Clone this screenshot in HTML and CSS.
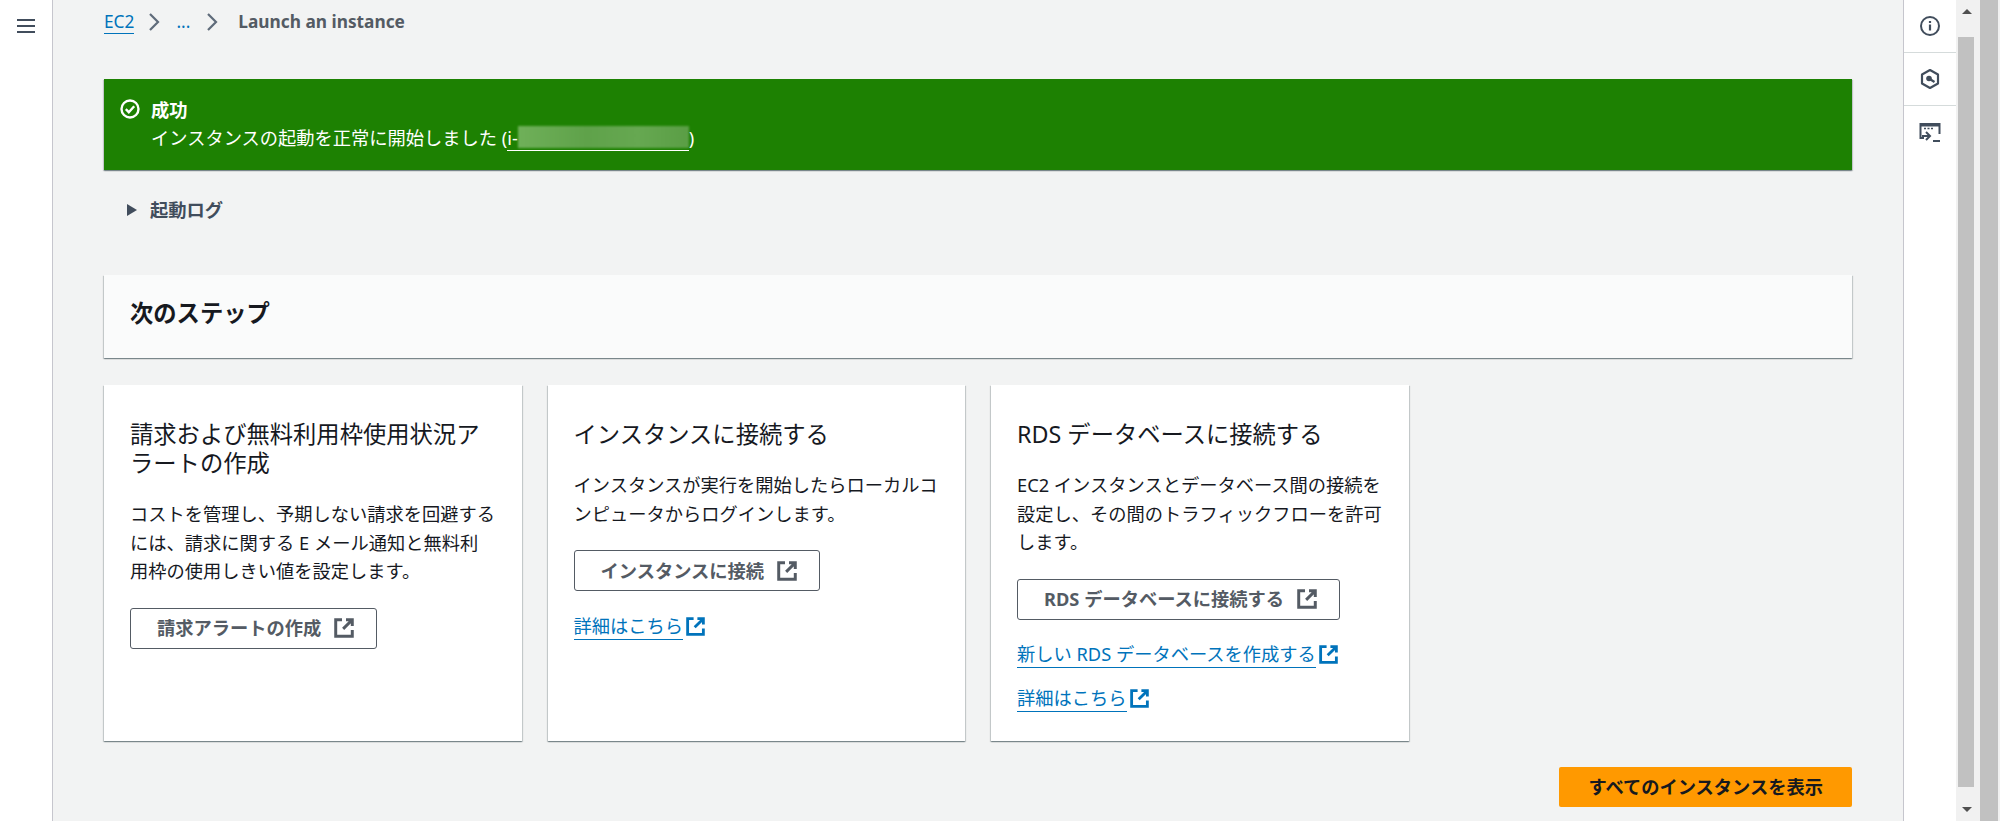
FILE: index.html
```html
<!DOCTYPE html>
<html lang="ja">

<head>
    <title>Launch an instance</title>
    <link rel="stylesheet" href="styles.css">
</head>

<body>
    <svg class="sprites" width="0" height="0">
        <symbol id="external" viewBox="1 1.500 17.500 17.500">
            <path d="M8 3H2.500v14.500H17V12M11.500 3H17v5.500M17 3L9 11" fill="none" stroke="currentColor" stroke-width="2.600" />
        </symbol>
    </svg>

    <div class="layout">
        <nav class="side-nav">
            <svg class="menu-icon" width="18" height="16" viewBox="0 0 18 16">
                <path d="M0 2h18M0 8h18M0 14h18" stroke="#414d5c" stroke-width="2" />
            </svg>
        </nav>

        <main class="content">
            <div class="breadcrumbs">
                <a class="crumb-link" href="#">EC2</a>
                <svg class="chevron" width="14" height="20" viewBox="0 0 14 20">
                    <path d="M3 2l8 8-8 8" fill="none" stroke="#5f6b7a" stroke-width="2.200" />
                </svg>
                <a class="crumb-more" href="#">...</a>
                <svg class="chevron" width="14" height="20" viewBox="0 0 14 20">
                    <path d="M3 2l8 8-8 8" fill="none" stroke="#5f6b7a" stroke-width="2.200" />
                </svg>
                <span class="crumb-current">Launch an instance</span>
            </div>

            <div class="flash">
                <svg class="flash-icon" width="20" height="20" viewBox="0 0 20 20">
                    <circle cx="10" cy="10" r="8.500" fill="none" stroke="#fff" stroke-width="2.400" />
                    <path d="M5.800 10.200l3 3 5.400-6" fill="none" stroke="#fff" stroke-width="2.400" />
                </svg>
                <div class="flash-text">
                    <div class="flash-title">成功</div>
                    <div>インスタンスの起動を正常に開始しました (<span class="instance-id">i-<span class="blurred"></span></span>)</div>
                </div>
            </div>

            <div class="log-toggle">
                <span class="caret"></span>
                <span>起動ログ</span>
            </div>

            <div class="steps-header">
                <h2>次のステップ</h2>
            </div>

            <div class="cards">
                <section class="card">
                    <h3>請求および無料利用枠使用状況アラートの作成</h3>
                    <p>コストを管理し、予期しない請求を回避するには、請求に関する E メール通知と無料利用枠の使用しきい値を設定します。</p>
                    <a class="btn" href="#">請求アラートの作成
                        <svg width="20" height="20"><use href="#external" /></svg>
                    </a>
                </section>

                <section class="card">
                    <h3>インスタンスに接続する</h3>
                    <p>インスタンスが実行を開始したらローカルコンピュータからログインします。</p>
                    <a class="btn" href="#">インスタンスに接続
                        <svg width="20" height="20"><use href="#external" /></svg>
                    </a>
                    <div class="card-links">
                        <div class="ext-link"><a href="#">詳細はこちら</a>
                            <svg width="19" height="19"><use href="#external" /></svg>
                        </div>
                    </div>
                </section>

                <section class="card">
                    <h3>RDS データベースに接続する</h3>
                    <p>EC2 インスタンスとデータベース間の接続を設定し、その間のトラフィックフローを許可します。</p>
                    <a class="btn" href="#">RDS データベースに接続する
                        <svg width="20" height="20"><use href="#external" /></svg>
                    </a>
                    <div class="card-links">
                        <div class="ext-link"><a href="#">新しい RDS データベースを作成する</a>
                            <svg width="19" height="19"><use href="#external" /></svg>
                        </div>
                        <div class="ext-link"><a href="#">詳細はこちら</a>
                            <svg width="19" height="19"><use href="#external" /></svg>
                        </div>
                    </div>
                </section>
            </div>

            <div class="actions">
                <a class="btn-primary" href="#">すべてのインスタンスを表示</a>
            </div>
        </main>

        <aside class="tools">
            <div class="tool">
                <svg width="22" height="22" viewBox="0 0 22 22">
                    <circle cx="11" cy="11" r="9" fill="none" stroke="#414d5c" stroke-width="2" />
                    <path d="M11 9.500v6" stroke="#414d5c" stroke-width="2.200" />
                    <path d="M11 6v2" stroke="#414d5c" stroke-width="2.200" />
                </svg>
            </div>
            <div class="tool">
                <svg width="22" height="22" viewBox="0 0 22 22">
                    <path d="M11 2l8 4.500v9L11 20l-8-4.500v-9z" fill="none" stroke="#414d5c" stroke-width="2.200" stroke-linejoin="round" />
                    <circle cx="10" cy="10.500" r="2.800" fill="#414d5c" />
                    <path d="M10 10.500l5.500 3.500" stroke="#414d5c" stroke-width="2.200" />
                </svg>
            </div>
            <div class="tool">
                <svg width="22" height="22" viewBox="0 0 22 22">
                    <path d="M5 16H1.500V2h19v10" fill="none" stroke="#414d5c" stroke-width="2" />
                    <path d="M1.500 3.500h19" stroke="#414d5c" stroke-width="2" />
                    <path d="M5 6.500h2M8.500 6.500h2M12 6.500h2" stroke="#414d5c" stroke-width="1.500" />
                    <path d="M7 10l4 4-4 4M3 14h7" fill="none" stroke="#414d5c" stroke-width="2" />
                    <path d="M14 19h7" stroke="#414d5c" stroke-width="2" />
                </svg>
            </div>
        </aside>

        <div class="scrollbar scrollbar-inner">
            <span class="arrow-up"></span>
            <div class="thumb"></div>
            <span class="arrow-down"></span>
        </div>
        <div class="scrollbar scrollbar-outer">
            <div class="thumb"></div>
        </div>
    </div>
</body>

</html>
```

FILE: styles.css
```css
* {
    margin: 0;
    padding: 0;
    box-sizing: border-box;
}

body {
    font-family: "Noto Sans", "Noto Sans CJK JP", sans-serif;
    font-size: 18.250px;
    line-height: 28px;
    color: #16191f;
    background: #f2f3f3;
    height: 100vh;
    overflow: hidden;
}

a {
    text-decoration: none;
}

.sprites {
    position: absolute;
}

.layout {
    display: flex;
    height: 100vh;
}

.side-nav {
    width: 53px;
    flex: none;
    background: #fff;
    border-right: 1px solid #c6c6cd;
    padding: 18px 0 0 17px;
}

.menu-icon {
    display: block;
}

.content {
    flex: 1;
    min-width: 0;
    padding: 8px 51px 0;
}

.breadcrumbs {
    display: flex;
    align-items: center;
    height: 28px;
    font-size: 17.300px;
}

.crumb-link {
    color: #0073bb;
    border-bottom: 1px solid #0073bb;
    line-height: 22px;
}

.crumb-more {
    color: #0073bb;
    margin: 0 15px;
}

.chevron {
    margin-left: 13px;
}

.crumb-more + .chevron {
    margin-left: 0;
}

.crumb-current {
    margin-left: 19px;
    font-weight: 700;
    color: #545b64;
}

.flash {
    display: flex;
    margin-top: 43px;
    height: 91px;
    padding: 17px 16px 0;
    background: #1d8102;
    color: #fff;
    box-shadow: 0 1px 1px rgba(0, 28, 36, 0.3), 1px 1px 1px rgba(0, 28, 36, 0.15), -1px 1px 1px rgba(0, 28, 36, 0.15);
}

.flash-icon {
    flex: none;
    margin: 3px 11px 0 0;
}

.flash-title {
    font-weight: 700;
}

.instance-id {
    display: inline-block;
    border-bottom: 1px solid #fff;
    line-height: 24px;
}

.blurred {
    display: inline-block;
    width: 171px;
    height: 22px;
    vertical-align: top;
    background: linear-gradient(90deg, #6fb059, #5fa24a 40%, #66a851 70%, #5a9e45);
    filter: blur(1px);
}

.log-toggle {
    display: flex;
    align-items: center;
    gap: 13px;
    margin: 26px 0 0 23px;
    font-weight: 700;
    color: #414d5c;
}

.caret {
    width: 0;
    height: 0;
    border-left: 10px solid #414d5c;
    border-top: 6px solid transparent;
    border-bottom: 6px solid transparent;
}

.steps-header {
    margin-top: 51px;
    height: 83px;
    padding: 23px 26px 0;
    background: #fafbfb;
    box-shadow: 0 1px 1px rgba(0, 28, 36, 0.3), 1px 1px 1px rgba(0, 28, 36, 0.15), -1px 1px 1px rgba(0, 28, 36, 0.15);
}

.steps-header h2 {
    font-size: 23.300px;
    line-height: 30px;
    font-weight: 700;
}

.cards {
    display: grid;
    grid-template-columns: repeat(4, 1fr);
    gap: 26px;
    margin-top: 27px;
}

.card {
    height: 356px;
    padding: 35px 26px 0;
    background: #fff;
    box-shadow: 0 1px 1px rgba(0, 28, 36, 0.3), 1px 1px 1px rgba(0, 28, 36, 0.15), -1px 1px 1px rgba(0, 28, 36, 0.15);
}

.card h3 {
    font-size: 23.300px;
    line-height: 29px;
    font-weight: 400;
    margin-bottom: 22px;
}

.card p {
    line-height: 28.500px;
    margin-bottom: 22px;
}

.btn {
    display: inline-flex;
    align-items: center;
    gap: 13px;
    height: 41px;
    padding: 0 22px 0 26px;
    border: 1px solid #545b64;
    border-radius: 3px;
    background: #fff;
    color: #545b64;
    font-weight: 700;
}

.card-links {
    margin-top: 21px;
    color: #0073bb;
}

.ext-link {
    display: flex;
    align-items: center;
    gap: 3px;
    height: 28px;
    margin-bottom: 16px;
}

.ext-link a {
    color: #0073bb;
    border-bottom: 1px solid #0073bb;
    line-height: 26px;
}

.actions {
    display: flex;
    justify-content: flex-end;
    margin-top: 26px;
}

.btn-primary {
    display: flex;
    align-items: center;
    height: 40px;
    padding: 0 29px;
    background: #ff9900;
    border-radius: 2px;
    color: #16191f;
    font-weight: 700;
}

.tools {
    width: 53px;
    flex: none;
    background: #fff;
    border-left: 1px solid #c6c6cd;
}

.tool {
    display: flex;
    align-items: center;
    justify-content: center;
    height: 53px;
    border-bottom: 1px solid #d5dbdb;
}

.tool:last-child {
    border-bottom: none;
}

.scrollbar {
    flex: none;
    position: relative;
    width: 22px;
    height: 100vh;
    background: #f1f1f1;
}

.scrollbar-inner .thumb {
    position: absolute;
    left: 2px;
    right: 4px;
    top: 37px;
    bottom: 34px;
    background: #c1c1c1;
}

.scrollbar-outer .thumb {
    position: absolute;
    left: 2px;
    right: 2px;
    top: 0;
    bottom: 0;
    background: #c1c1c1;
}

.arrow-up,
.arrow-down {
    position: absolute;
    left: 6px;
    width: 0;
    height: 0;
    border-left: 5px solid transparent;
    border-right: 5px solid transparent;
}

.arrow-up {
    top: 9px;
    border-bottom: 5px solid #505050;
}

.arrow-down {
    bottom: 9px;
    border-top: 5px solid #505050;
}
```
